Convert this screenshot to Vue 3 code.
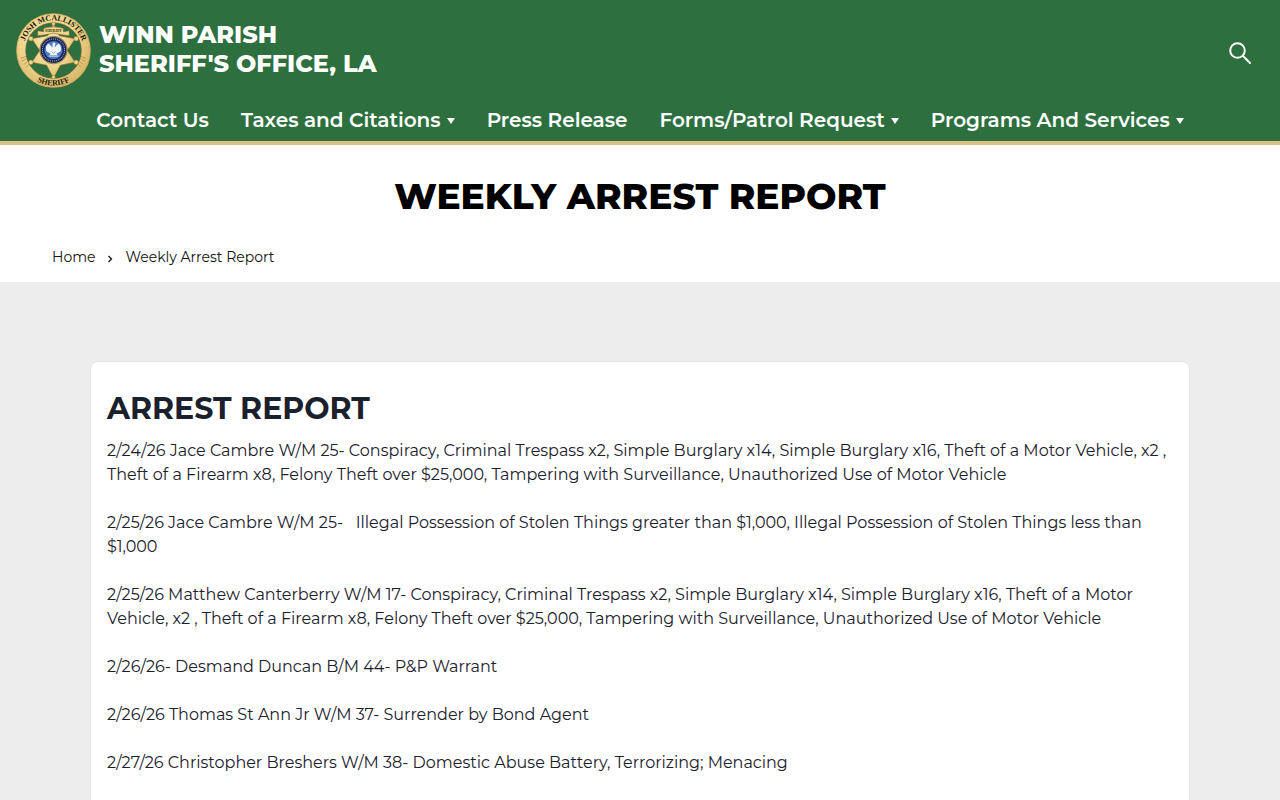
<script setup>
import { ref } from "vue";

const menu = ref([
  { label: "Contact Us", dropdown: false },
  { label: "Taxes and Citations", dropdown: true },
  { label: "Press Release", dropdown: false },
  { label: "Forms/Patrol Request", dropdown: true },
  { label: "Programs And Services", dropdown: true },
]);

const arrests = [
  "2/24/26 Jace Cambre W/M 25- Conspiracy, Criminal Trespass x2, Simple Burglary x14, Simple Burglary x16, Theft of a Motor Vehicle, x2 , Theft of a Firearm x8, Felony Theft over $25,000, Tampering with Surveillance, Unauthorized Use of Motor Vehicle",
  "2/25/26 Jace Cambre W/M 25-\u00a0\u00a0 Illegal Possession of Stolen Things greater than $1,000, Illegal Possession of Stolen Things less than $1,000",
  "2/25/26 Matthew Canterberry W/M 17- Conspiracy, Criminal Trespass x2, Simple Burglary x14, Simple Burglary x16, Theft of a Motor Vehicle, x2 , Theft of a Firearm x8, Felony Theft over $25,000, Tampering with Surveillance, Unauthorized Use of Motor Vehicle",
  "2/26/26- Desmand Duncan B/M 44- P&P Warrant",
  "2/26/26 Thomas St Ann Jr W/M 37- Surrender by Bond Agent",
  "2/27/26 Christopher Breshers W/M 38- Domestic Abuse Battery, Terrorizing; Menacing",
];
</script>

<template>
  <div class="page">
    <header class="header">
      <div class="top">
        <a href="#" class="brand">
          <svg class="seal" viewBox="0 0 76 76" aria-hidden="true">
            <defs>
              <radialGradient id="gold" cx="42%" cy="38%" r="72%">
                <stop offset="0" stop-color="#fbedb8" />
                <stop offset="0.6" stop-color="#edd48c" />
                <stop offset="1" stop-color="#d6b468" />
              </radialGradient>
              <path id="arc-top" d="M 7.5 38 A 30.5 30.5 0 0 1 68.5 38" />
              <path id="arc-bottom" d="M 2.5 38 A 35.5 35.5 0 0 0 73.5 38" />
            </defs>
            <circle cx="38" cy="38" r="32.9" fill="none" stroke="url(#gold)" stroke-width="9.4" />
            <circle cx="38" cy="38" r="37.4" fill="none" stroke="#c09a50" stroke-width="0.6" />
            <circle cx="38" cy="38" r="28.2" fill="none" stroke="#806427" stroke-width="0.6" />
            <path
              d="M38 11 L44 23 L60 26 L52 38 L60 50 L45 53 L38 66 L31 53 L16 50 L24 38 L16 26 L32 23 Z"
              fill="url(#gold)"
              stroke="#8d6b2a"
              stroke-width="0.7"
            />
            <g fill="#f0d488" stroke="#8d6b2a" stroke-width="0.5">
              <circle cx="15" cy="26" r="2.4" />
              <circle cx="61" cy="26" r="2.4" />
              <circle cx="15" cy="50" r="2.4" />
              <circle cx="61" cy="50" r="2.4" />
              <circle cx="38" cy="11" r="1.8" />
              <circle cx="38" cy="65" r="1.8" />
            </g>
            <path
              d="M28 15.5 Q38 12.5 48 15.5 L48 19 L54 18 L54 23 L46 22 Q38 19 30 22 L22 23 L22 18 L28 19 Z"
              fill="#f0d890"
              stroke="#806427"
              stroke-width="0.6"
            />
            <text x="38" y="19" class="ribbon" text-anchor="middle">SHERIFF</text>
            <circle cx="38" cy="37.5" r="14" fill="#e0bd62" stroke="#6e5520" stroke-width="0.6" />
            <circle cx="38" cy="37.5" r="13.2" fill="#1b2560" />
            <circle cx="38" cy="37.5" r="11.2" fill="none" stroke="#9fa9c4" stroke-width="1.1" stroke-dasharray="1 1" />
            <circle cx="38" cy="37.5" r="9.2" fill="#4a7fc0" />
            <path
              d="M37 31 Q39 29 40 31 L39 35 L43 31 Q47 34 45 39 L41 41 L43 44 H33 L35 41 L31 39 Q29 34 33 31 L37 35 Z"
              fill="#f2f5f7"
            />
            <path d="M33 43 H43 M36 39 L38 41 L40 39" fill="none" stroke="#8296ad" stroke-width="0.8" />
            <path
              d="M5 46 L10 44 M6 49 L11 46 M8 52 L12 49 M10 55 L14 51 M71 46 L66 44 M70 49 L65 46 M68 52 L64 49 M66 55 L62 51"
              stroke="#b48c40"
              stroke-width="0.8"
            />
            <text class="seal-text">
              <textPath href="#arc-top" startOffset="50%" text-anchor="middle">JOSH MCALLISTER</textPath>
            </text>
            <text class="seal-text">
              <textPath href="#arc-bottom" startOffset="50%" text-anchor="middle">SHERIFF</textPath>
            </text>
          </svg>
          <span class="brand-name">WINN PARISH<br />SHERIFF'S OFFICE, LA</span>
        </a>
        <button class="search" type="button" aria-label="Search">
          <svg viewBox="0 0 24 24" aria-hidden="true">
            <circle cx="9.5" cy="9.5" r="7.3" />
            <path d="M15 15 L22 22" />
          </svg>
        </button>
      </div>
      <nav class="nav">
        <a v-for="item in menu" :key="item.label" href="#" class="nav-link">
          {{ item.label }}
          <svg v-if="item.dropdown" class="caret" viewBox="0 0 8 6" aria-hidden="true">
            <path d="M0 0 H8 L4 6 Z" />
          </svg>
        </a>
      </nav>
    </header>

    <section class="intro">
      <h1>WEEKLY ARREST REPORT</h1>
      <nav class="breadcrumb" aria-label="Breadcrumb">
        <a href="#">Home</a>
        <svg class="chevron" viewBox="0 0 6 8" aria-hidden="true">
          <path d="M1.5 1 L4.5 4 L1.5 7" />
        </svg>
        <span>Weekly Arrest Report</span>
      </nav>
    </section>

    <main class="content">
      <article class="card">
        <h2>ARREST REPORT</h2>
        <p v-for="arrest in arrests" :key="arrest">{{ arrest }}</p>
      </article>
    </main>
  </div>
</template>

<style>
body {
  background: #ededed;
}
</style>

<style scoped>
.page {
  min-height: 100vh;
  font-family: Montserrat, Inter, sans-serif;
  color: #1a202c;
}

a {
  color: inherit;
  text-decoration: none;
}

.header {
  background: #2d6f3f;
  border-bottom: 4px solid #dcbe87;
  color: #fff;
}

.top {
  display: flex;
  align-items: center;
  justify-content: space-between;
  padding: 13px 28px 0 16px;
}

.brand {
  display: flex;
  align-items: center;
  gap: 8px;
}

.seal {
  width: 75px;
  height: 75px;
}

.seal-text {
  font-family: "Liberation Serif", serif;
  font-size: 8px;
  font-weight: 700;
  fill: #1c1708;
}

.ribbon {
  font-family: "Liberation Serif", serif;
  font-size: 4px;
  font-weight: 700;
  fill: #3c3011;
}

.brand-name {
  padding-bottom: 3px;
  font-size: 24px;
  font-weight: 800;
  line-height: 29px;
}

.search {
  width: 24px;
  height: 24px;
  margin-top: 5px;
  padding: 0;
  border: 0;
  background: none;
  cursor: pointer;
}

.search svg {
  display: block;
  fill: none;
  stroke: #fff;
  stroke-width: 2;
  stroke-linecap: round;
}

.nav {
  display: flex;
  justify-content: center;
  gap: 32px;
  padding: 16px 0 5px;
}

.nav-link {
  display: flex;
  align-items: center;
  gap: 6px;
  font-size: 20px;
  font-weight: 600;
  line-height: 32px;
  white-space: nowrap;
}

.caret {
  width: 8px;
  height: 6px;
  margin-top: 2px;
  fill: #fff;
}

.intro {
  padding: 28px 52px 12px;
  background: #fff;
}

h1 {
  margin: 0;
  color: #000;
  font-size: 36px;
  font-weight: 800;
  line-height: 46px;
  text-align: center;
}

.breadcrumb {
  display: flex;
  align-items: center;
  margin-top: 26px;
  color: #111;
  font-size: 14px;
  line-height: 25px;
}

.chevron {
  width: 6px;
  height: 8px;
  margin: 2px 12px 0;
  fill: none;
  stroke: #111;
  stroke-width: 1.3;
}

.content {
  padding: 79px 16px;
}

.card {
  box-sizing: border-box;
  max-width: 1100px;
  margin: 0 auto;
  padding: 24px 16px;
  border: 1px solid #e6e6e6;
  border-radius: 8px;
  background: #fff;
}

h2 {
  margin: 0 0 8px;
  font-size: 30px;
  font-weight: 700;
  line-height: 45px;
}

.card p {
  margin: 0 0 24px;
  font-size: 16px;
  line-height: 24px;
}
</style>
